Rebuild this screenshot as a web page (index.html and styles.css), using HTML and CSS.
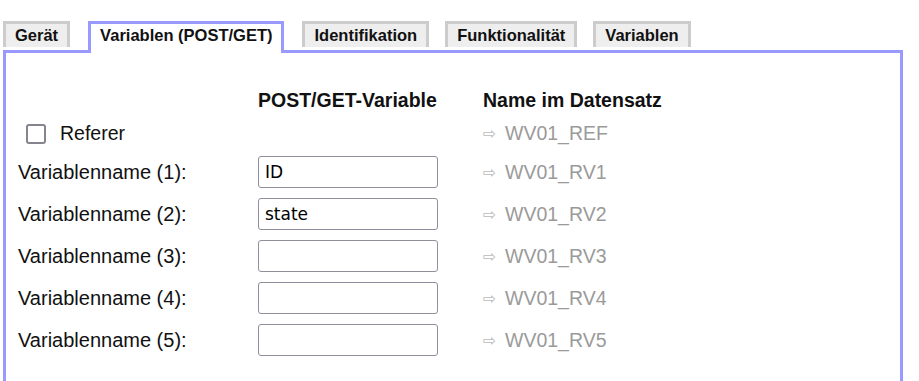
FILE: index.html
```html
<!doctype html>
<html>
	<head>
	    <meta charset="utf-8"/>
	    <title>Variablen (POST/GET)</title>
		<link rel="stylesheet" href="styles.css">
	</head>
	<body>

	   <div id="page">
	       <div class="tabs">
	           <div class="tab">Gerät</div>
	           <div class="tab active">Variablen (POST/GET)</div>
	           <div class="tab">Identifikation</div>
	           <div class="tab">Funktionalität</div>
	           <div class="tab">Variablen</div>
	       </div>

	       <div class="panel">
	           <form class="vars" onsubmit="return false">
	               <div></div>
	               <div class="head">POST/GET-Variable</div>
	               <div class="head">Name im Datensatz</div>

	               <label class="check"><input type="checkbox" name="referer"/> Referer</label>
	               <div></div>
	               <div class="dbname"><span class="arrow">⇨</span>WV01_REF</div>

	               <div class="label">Variablenname (1):</div>
	               <div><input type="text" name="rv1" value="ID"/></div>
	               <div class="dbname"><span class="arrow">⇨</span>WV01_RV1</div>

	               <div class="label">Variablenname (2):</div>
	               <div><input type="text" name="rv2" value="state"/></div>
	               <div class="dbname"><span class="arrow">⇨</span>WV01_RV2</div>

	               <div class="label">Variablenname (3):</div>
	               <div><input type="text" name="rv3" value=""/></div>
	               <div class="dbname"><span class="arrow">⇨</span>WV01_RV3</div>

	               <div class="label">Variablenname (4):</div>
	               <div><input type="text" name="rv4" value=""/></div>
	               <div class="dbname"><span class="arrow">⇨</span>WV01_RV4</div>

	               <div class="label">Variablenname (5):</div>
	               <div><input type="text" name="rv5" value=""/></div>
	               <div class="dbname"><span class="arrow">⇨</span>WV01_RV5</div>
	           </form>
	       </div>
	   </div>

	</body>
</html>
```

FILE: styles.css
```css
body{
    margin: 0;
    font-family: "Liberation Sans", Arial, sans-serif;
    color: #111;
    background: #fff;
}

#page{
    width: 900px;
    margin-left: 3px;
    padding-top: 21px;
}

.tabs{
    display: flex;
    align-items: flex-end;
    gap: 16px;
}
.tab{
    border: 3px solid #ccc;
    border-bottom: 0;
    background: #eee;
    padding: 0 9px;
    line-height: 23px;
    margin-bottom: 3px;
    font-size: 16.5px;
    font-weight: bold;
    white-space: nowrap;
}
.tab.active{
    border-color: #9999ff;
    background: #fff;
    padding-bottom: 6px;
    margin: 0 2px -3px;
    position: relative;
    z-index: 1;
}

.panel{
    border: 3px solid #9999ff;
    height: 360px;
}

.vars{
    display: grid;
    grid-template-columns: 240px 225px 1fr;
    grid-template-rows: 32px 35px repeat(5, 42px);
    align-items: center;
    padding: 31px 0 0 12px;
    font-size: 19.5px;
}

.head{
    font-weight: bold;
}

.label{
    font-size: 20px;
}

.check{
    display: flex;
    align-items: center;
    gap: 14px;
}
.check input{
    appearance: none;
    width: 20px;
    height: 20px;
    margin: 0 0 0 8px;
    border: 2.5px solid #858590;
    border-radius: 3px;
    background: #fff;
}

.vars input[type=text]{
    box-sizing: border-box;
    width: 180px;
    height: 32px;
    margin: 0;
    padding: 0 6px;
    border: 1px solid #8f8f9d;
    border-radius: 3px;
    font-family: "DejaVu Sans", Verdana, sans-serif;
    font-size: 17px;
    color: #000;
}

.dbname{
    color: #9a9a9a;
}
.arrow{
    display: inline-block;
    width: 22px;
    font-family: "DejaVu Sans", sans-serif;
    font-size: 16px;
    color: #bbb;
    vertical-align: 1px;
}
```
